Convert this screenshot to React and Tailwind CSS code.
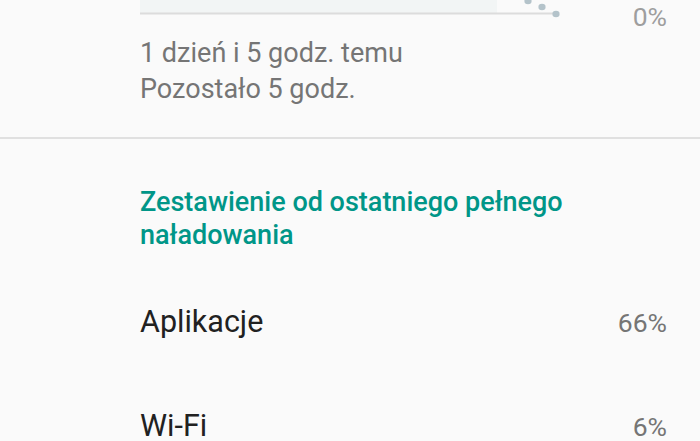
export default function App() {
  return (
    <div
      className="w-[700px] h-[441px] overflow-hidden bg-[#fafafa]"
      style={{ fontFamily: "Roboto, 'Noto Sans', sans-serif" }}
    >
      <div className="pl-[140px] pr-[33px]">
        <div className="flex justify-between items-start h-[35px]">
          <svg width="420" height="35" viewBox="0 0 420 35" className="block">
            <rect x="0" y="0" width="357" height="13" fill="#f2f5f5" />
            <line x1="0" y1="13.5" x2="416" y2="13.5" stroke="#dcdcdc" strokeWidth="2" />
            <ellipse cx="388" cy="1" rx="3.6" ry="3.2" fill="#b4c3ca" />
            <ellipse cx="402" cy="7" rx="3.6" ry="3.2" fill="#b4c3ca" />
            <ellipse cx="416" cy="14" rx="3.6" ry="3.2" fill="#b4c3ca" />
          </svg>
          <div className="text-[26.5px] leading-[26px] mt-[4px] text-[#9e9e9e]">0%</div>
        </div>
        <div className="text-[27px] leading-[36px] text-[#757575]">
          <div>1 dzień i 5 godz. temu</div>
          <div>Pozostało 5 godz.</div>
        </div>
      </div>
      <div className="mt-[30px] h-[2px] bg-[#e0e0e0]" />
      <div className="pl-[140px] pr-[33px]">
        <div className="mt-[47px] text-[27px] leading-[32.5px] font-medium text-[#009688] pr-[80px]">
          Zestawienie od ostatniego pełnego naładowania
        </div>
        <div className="mt-[51px] flex justify-between items-baseline leading-[40px]">
          <span className="text-[30.5px] text-[#212121]">Aplikacje</span>
          <span className="text-[26.5px] text-[#757575]">66%</span>
        </div>
        <div className="mt-[63px] flex justify-between items-baseline leading-[40px]">
          <span className="text-[30.5px] text-[#212121]">Wi-Fi</span>
          <span className="text-[26.5px] text-[#757575]">6%</span>
        </div>
      </div>
    </div>
  );
}
